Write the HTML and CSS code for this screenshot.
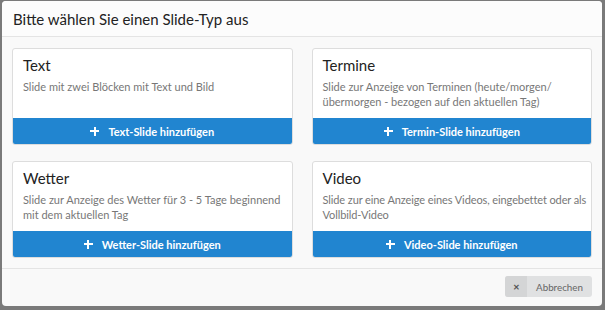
FILE: index.html
```html
<!DOCTYPE html>
<html lang="de">
<head>
  <meta charset="UTF-8">
  <title>Slide-Typ</title>
  <link rel="stylesheet" href="styles.css">
</head>
<body>
<main class="modal">
  <header class="modalHeader">Bitte wählen Sie einen Slide-Typ aus</header>
  <section class="modalContent">
    <div class="slideCard">
      <div class="cardBody">
        <h2>Text</h2>
        <p>Slide mit zwei Blöcken mit Text und Bild</p>
      </div>
      <button class="addButton"><span class="plus"></span>Text-Slide hinzufügen</button>
    </div>
    <div class="slideCard">
      <div class="cardBody">
        <h2>Termine</h2>
        <p>Slide zur Anzeige von Terminen (heute/morgen/ übermorgen - bezogen auf den aktuellen Tag)</p>
      </div>
      <button class="addButton"><span class="plus"></span>Termin-Slide hinzufügen</button>
    </div>
    <div class="slideCard">
      <div class="cardBody">
        <h2>Wetter</h2>
        <p>Slide zur Anzeige des Wetter für 3 - 5 Tage beginnend mit dem aktuellen Tag</p>
      </div>
      <button class="addButton"><span class="plus"></span>Wetter-Slide hinzufügen</button>
    </div>
    <div class="slideCard">
      <div class="cardBody">
        <h2>Video</h2>
        <p class="tight">Slide zur eine Anzeige eines Videos, eingebettet oder als<br>Vollbild-Video</p>
      </div>
      <button class="addButton"><span class="plus"></span>Video-Slide hinzufügen</button>
    </div>
  </section>
  <footer class="modalActions">
    <button class="cancelButton"><span class="cancelIcon">&#x2715;</span><span class="cancelLabel">Abbrechen</span></button>
  </footer>
</main>
</body>
</html>
```

FILE: styles.css
```css
:root {
  --blue: #2185d0;
  --textColor: #222;
  --mutedColor: #777;
  --lineColor: #e4e4e4;
}
* {
  box-sizing: border-box;
}
body {
  margin: 0;
  width: 605px;
  height: 310px;
  overflow: hidden;
  background: #7a7a7a;
  font-family: Lato, "Liberation Sans", sans-serif;
  padding: 1px 0 0 2px;
}
.modal {
  width: 600px;
  height: 305px;
  background: #f9f9f9;
  border-radius: 4px;
  display: flex;
  flex-direction: column;
}
.modalHeader {
  height: 36px;
  padding: 0 11px;
  display: flex;
  align-items: center;
  font-size: 15px;
  color: var(--textColor);
  background: #fcfcfc;
  border-bottom: 1px solid var(--lineColor);
  border-radius: 4px 4px 0 0;
}
.modalContent {
  display: grid;
  grid-template-columns: 1fr 1fr;
  column-gap: 19px;
  row-gap: 16px;
  padding: 11px 10px 10px 10px;
  border-bottom: 1px solid var(--lineColor);
}
.slideCard {
  display: flex;
  flex-direction: column;
  background: #fff;
  border: 1px solid #ddd;
  border-radius: 3px;
  overflow: hidden;
}
.cardBody {
  flex: 1;
  padding: 7px 4px 9px 10px;
}
.cardBody h2 {
  margin: 0;
  font-size: 15px;
  line-height: 18px;
  font-weight: 400;
  color: var(--textColor);
}
.cardBody p {
  margin: 5px 0 0 0;
  font-size: 11px;
  line-height: 15px;
  color: var(--mutedColor);
}
.cardBody p.tight {
  white-space: nowrap;
  letter-spacing: -0.1px;
}
.addButton {
  height: 26px;
  border: 0;
  background: var(--blue);
  color: #fff;
  font-family: inherit;
  font-size: 11px;
  font-weight: 700;
  display: flex;
  align-items: center;
  justify-content: center;
  padding: 0;
}
.plus {
  position: relative;
  width: 9px;
  height: 9px;
  margin-right: 9px;
}
.plus::before,
.plus::after {
  content: "";
  position: absolute;
  background: #fff;
}
.plus::before {
  left: 0;
  top: 3.5px;
  width: 9px;
  height: 2px;
}
.plus::after {
  left: 3.5px;
  top: 0;
  width: 2px;
  height: 9px;
}
.modalActions {
  flex: 1;
  display: flex;
  justify-content: flex-end;
  align-items: center;
  padding: 0 10px 2px 0;
}
.cancelButton {
  display: flex;
  height: 21px;
  width: 87px;
  padding: 0;
  border: 0;
  border-radius: 3px;
  background: #e0e1e2;
  color: #666;
  font-family: inherit;
  font-size: 9.8px;
  overflow: hidden;
}
.cancelIcon {
  width: 22px;
  height: 100%;
  display: flex;
  align-items: center;
  justify-content: center;
  background: #d4d5d6;
  font-size: 8px;
  font-weight: 700;
  color: #555;
}
.cancelLabel {
  flex: 1;
  display: flex;
  align-items: center;
  justify-content: center;
}
```
